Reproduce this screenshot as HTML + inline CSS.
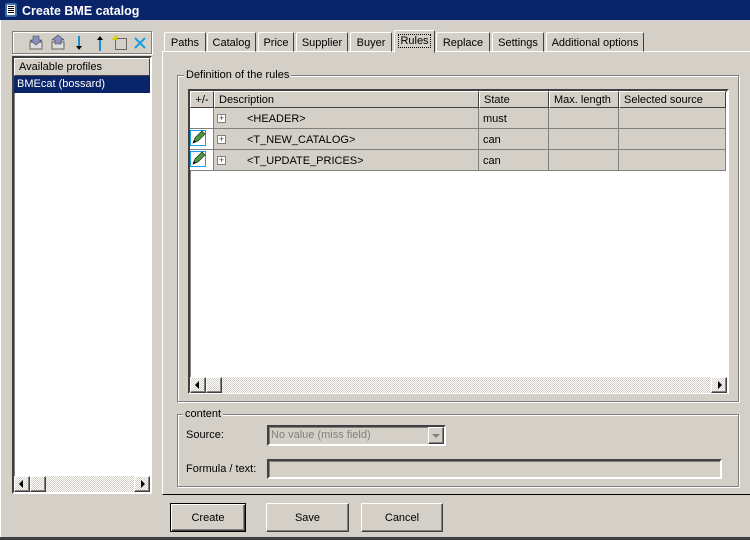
<!DOCTYPE html>
<html><head><style>
*{box-sizing:border-box;margin:0;padding:0}
body{width:750px;height:540px;background:#d4d0c8;font-family:"Liberation Sans",sans-serif;font-size:11px;color:#000;position:relative;overflow:hidden}
.a{position:absolute}
.sunk{border:1px solid;border-color:#808080 #fff #fff #808080}
.sunk2{border:2px solid;border-color:#404040 #fff #fff #404040;box-shadow:inset 1px 1px 0 #808080}
.raised{border:1px solid;border-color:#fff #404040 #404040 #fff;box-shadow:inset -1px -1px 0 #808080}
.grp{border:1px solid #808080;box-shadow:1px 1px 0 #fff, inset 1px 1px 0 #fff}
.lbl{background:#d4d0c8;padding:0 2px}
.tab{position:absolute;top:32px;height:20px;border:1px solid;border-color:#fff #404040 transparent #fff;border-radius:2px 2px 0 0;padding:4px 0 0;text-align:center;font-size:11px}
.cell{position:absolute;border-right:1px solid #808080;border-bottom:1px solid #808080;padding:5px 4px 0;background:#d4d0c8}
.hd{position:absolute;border:1px solid;border-color:#fff #404040 #404040 #fff;padding:2px 4px;background:#d4d0c8}
.pm{position:absolute;width:9px;height:9px;border:1px solid #808080;background:#fff;font-size:9px;line-height:7px;text-align:center;color:#444}
.btn{position:absolute;top:503px;height:29px;text-align:center;padding-top:8px;font-size:11px}
.hatch{background:repeating-conic-gradient(#d4d0c8 0 25%,#fff 0 50%) 0 0/2px 2px}
</style></head><body>
<div class="a" style="left:0;top:0;width:750px;height:20px;background:#0a246a"></div>
<div class="a" style="left:5px;top:3px;width:12px;height:14px;background:#fff;border-radius:2px;border:2px solid #3a6ea5"></div>
<div class="a" style="left:8px;top:6px;width:6px;height:8px;background:repeating-linear-gradient(#000 0 1px,#fff 1px 2px)"></div>
<div class="a" style="left:22px;top:4px;color:#fff;font-weight:bold;font-size:12.5px">Create BME catalog</div>
<div class="a" style="left:0;top:20px;width:1px;height:520px;background:#fff"></div>
<div class="a" style="left:0;top:537px;width:750px;height:3px;background:#404040"></div>

<div class="a grp" style="left:12px;top:31px;width:140px;height:23px"></div>
<svg class="a" style="left:28px;top:34px" width="120" height="18">
<rect x="2" y="8" width="12" height="7" fill="#ddd" stroke="#666"/><path d="M5 2h6v4h3l-6 5-6-5h3z" fill="#8a8fc0" stroke="#444" stroke-width=".6"/>
<rect x="24" y="8" width="12" height="7" fill="#ddd" stroke="#666"/><path d="M27 10h6v-4h3l-6-5-6 5h3z" fill="#8a8fc0" stroke="#444" stroke-width=".6"/>
<path d="M51 2v12" stroke="#1a8fd0" stroke-width="2"/><path d="M48 12l3 4 3-4z" fill="#000"/>
<path d="M72 5v12" stroke="#1a8fd0" stroke-width="2"/><path d="M69 6l3-4 3 4z" fill="#000"/>
<rect x="87.5" y="4.5" width="11" height="11" fill="none" stroke="#000" stroke-dasharray="1,1"/><path d="M86 3l4 3M88 1v4M84 5h4" stroke="#e0d000" stroke-width="1.5"/>
<path d="M107 4l10 10M117 4l-10 10" stroke="#1a9fe0" stroke-width="2"/>
</svg>
<div class="a sunk2" style="left:12px;top:56px;width:140px;height:438px;background:#fff"></div>
<div class="a hd" style="left:14px;top:58px;width:136px;height:18px">Available profiles</div>
<div class="a" style="left:14px;top:76px;width:136px;height:17px;background:#0a246a;color:#fff;padding:2px 3px">BMEcat (bossard)</div>
<div class="a hatch" style="left:14px;top:476px;width:136px;height:16px"></div>
<div class="a raised" style="left:14px;top:476px;width:16px;height:16px"></div>
<div class="a" style="left:19px;top:480px;width:0;height:0;border:4px solid transparent;border-right-color:#000;border-left:0"></div>
<div class="a raised" style="left:30px;top:476px;width:16px;height:16px"></div>
<div class="a raised" style="left:134px;top:476px;width:16px;height:16px"></div>
<div class="a" style="left:141px;top:480px;width:0;height:0;border:4px solid transparent;border-left-color:#000;border-right:0"></div>

<div class="a" style="left:162px;top:51px;width:588px;height:444px;border-left:1px solid #fff;border-top:1px solid #fff;border-bottom:1px solid #000"></div>
<div class="tab" style="left:164px;width:42px">Paths</div>
<div class="tab" style="left:207px;width:49px">Catalog</div>
<div class="tab" style="left:258px;width:36px">Price</div>
<div class="tab" style="left:296px;width:52px">Supplier</div>
<div class="tab" style="left:350px;width:42px">Buyer</div>
<div class="tab" style="left:394px;top:30px;height:23px;width:41px;background:#d4d0c8;padding-top:4px"><span style="outline:1px dotted #000;padding:0 1px">Rules</span></div>
<div class="tab" style="left:436px;width:54px">Replace</div>
<div class="tab" style="left:492px;width:52px">Settings</div>
<div class="tab" style="left:546px;width:98px">Additional options</div>

<div class="a grp" style="left:177px;top:75px;width:562px;height:327px"></div>
<div class="a lbl" style="left:184px;top:69px">Definition of the rules</div>
<div class="a sunk2" style="left:188px;top:89px;width:541px;height:305px;background:#fff"></div>
<div class="hd" style="left:190px;top:91px;width:24px;height:17px;text-align:center;padding:2px 0">+/-</div>
<div class="hd" style="left:214px;top:91px;width:265px;height:17px">Description</div>
<div class="hd" style="left:479px;top:91px;width:70px;height:17px">State</div>
<div class="hd" style="left:549px;top:91px;width:70px;height:17px">Max. length</div>
<div class="hd" style="left:619px;top:91px;width:107px;height:17px">Selected source</div>
<div class="cell" style="left:190px;top:108px;width:24px;height:21px;background:#fff"></div>
<div class="cell" style="left:214px;top:108px;width:265px;height:21px;padding-left:33px">&lt;HEADER&gt;</div>
<div class="cell" style="left:479px;top:108px;width:70px;height:21px">must</div>
<div class="cell" style="left:549px;top:108px;width:70px;height:21px"></div>
<div class="cell" style="left:619px;top:108px;width:107px;height:21px"></div>
<div class="cell" style="left:190px;top:129px;width:24px;height:21px;background:#fff"></div>
<div class="cell" style="left:214px;top:129px;width:265px;height:21px;padding-left:33px">&lt;T_NEW_CATALOG&gt;</div>
<div class="cell" style="left:479px;top:129px;width:70px;height:21px">can</div>
<div class="cell" style="left:549px;top:129px;width:70px;height:21px"></div>
<div class="cell" style="left:619px;top:129px;width:107px;height:21px"></div>
<div class="cell" style="left:190px;top:150px;width:24px;height:21px;background:#fff"></div>
<div class="cell" style="left:214px;top:150px;width:265px;height:21px;padding-left:33px">&lt;T_UPDATE_PRICES&gt;</div>
<div class="cell" style="left:479px;top:150px;width:70px;height:21px">can</div>
<div class="cell" style="left:549px;top:150px;width:70px;height:21px"></div>
<div class="cell" style="left:619px;top:150px;width:107px;height:21px"></div>
<div class="pm" style="left:217px;top:114px">+</div>
<div class="pm" style="left:217px;top:135px">+</div>
<div class="pm" style="left:217px;top:156px">+</div>
<svg class="a" style="left:190px;top:130px" width="17" height="17"><rect x=".5" y=".5" width="15" height="15" fill="#fff" stroke="#1aa0e0"/><path d="M3 13l2-5 7-7 3 3-7 7z" fill="#4a9a3a" stroke="#222" stroke-width=".7"/><path d="M3 13l1-3 2 2z" fill="#000"/></svg>
<svg class="a" style="left:190px;top:151px" width="17" height="17"><rect x=".5" y=".5" width="15" height="15" fill="#fff" stroke="#1aa0e0"/><path d="M3 13l2-5 7-7 3 3-7 7z" fill="#4a9a3a" stroke="#222" stroke-width=".7"/><path d="M3 13l1-3 2 2z" fill="#000"/></svg>
<div class="a hatch" style="left:190px;top:377px;width:537px;height:16px"></div>
<div class="a raised" style="left:190px;top:377px;width:16px;height:16px"></div>
<div class="a" style="left:195px;top:381px;width:0;height:0;border:4px solid transparent;border-right-color:#000;border-left:0"></div>
<div class="a raised" style="left:206px;top:377px;width:16px;height:16px"></div>
<div class="a raised" style="left:711px;top:377px;width:16px;height:16px"></div>
<div class="a" style="left:718px;top:381px;width:0;height:0;border:4px solid transparent;border-left-color:#000;border-right:0"></div>

<div class="a grp" style="left:177px;top:414px;width:562px;height:73px"></div>
<div class="a lbl" style="left:183px;top:408px">content</div>
<div class="a" style="left:186px;top:429px">Source:</div>
<div class="a sunk2" style="left:267px;top:425px;width:179px;height:21px;color:#808080;padding:2px 2px">No value (miss field)</div>
<div class="a raised" style="left:428px;top:427px;width:16px;height:17px"></div>
<div class="a" style="left:432px;top:434px;width:0;height:0;border:4px solid transparent;border-top-color:#808080;border-bottom:0"></div>
<div class="a" style="left:186px;top:463px">Formula / text:</div>
<div class="a sunk2" style="left:267px;top:459px;width:455px;height:20px"></div>

<div class="btn" style="left:170px;width:76px;border:1px solid #000;box-shadow:inset 1px 1px 0 #fff,inset -1px -1px 0 #404040,inset -2px -2px 0 #808080">Create</div>
<div class="btn raised" style="left:266px;width:83px">Save</div>
<div class="btn raised" style="left:361px;width:82px">Cancel</div>
</body></html>
